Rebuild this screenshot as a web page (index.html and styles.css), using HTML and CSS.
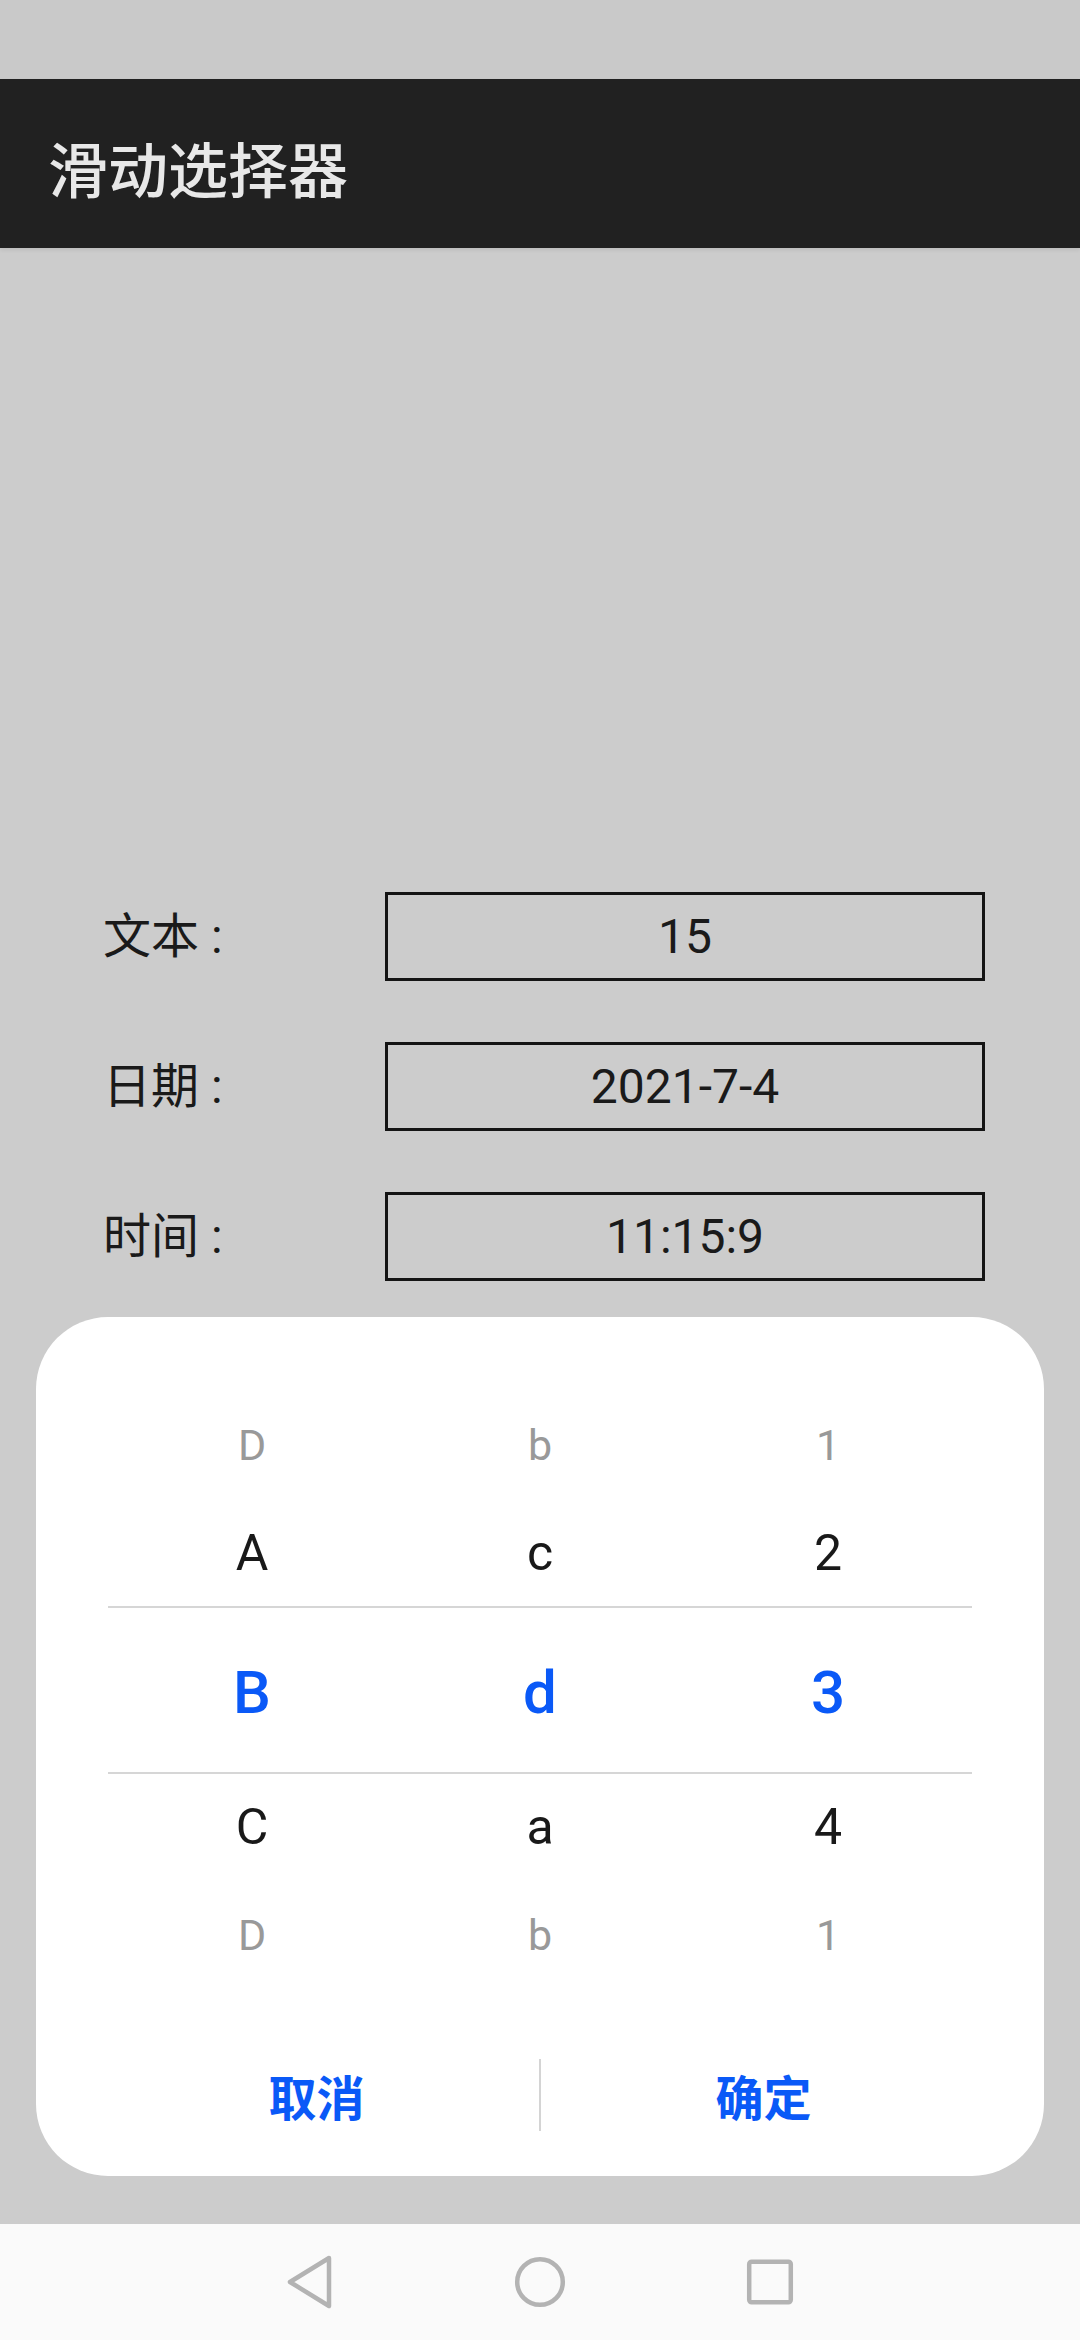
FILE: index.html
```html
<!DOCTYPE html>
<html lang="zh-CN">
<head>
<meta charset="utf-8">
<title>滑动选择器</title>
<link rel="stylesheet" href="styles.css">
</head>
<body>
<div class="screen">
  <div class="statusbar"></div>
  <header class="appbar"><h1 class="title">滑动选择器</h1></header>
  <main class="content">
    <div class="form">
      <div class="form-row"><span class="label">文本 :</span><div class="field">15</div></div>
      <div class="form-row"><span class="label">日期 :</span><div class="field">2021-7-4</div></div>
      <div class="form-row"><span class="label">时间 :</span><div class="field">11:15:9</div></div>
    </div>
  </main>
  <nav class="navbar">
    <div class="nav-slot">
      <svg class="nav-icon" width="50" height="56" viewBox="0 0 50 56"><path d="M44 4 L5 28 L44 52 Z" fill="none" stroke="#b3b3b3" stroke-width="4.5" stroke-linejoin="round"/></svg>
    </div>
    <div class="nav-slot">
      <svg class="nav-icon" width="54" height="54" viewBox="0 0 54 54"><circle cx="27" cy="27" r="22.8" fill="none" stroke="#b3b3b3" stroke-width="4.5"/></svg>
    </div>
    <div class="nav-slot">
      <svg class="nav-icon" width="50" height="50" viewBox="0 0 50 50"><rect x="4.2" y="4.7" width="41.6" height="40.6" rx="2.5" fill="none" stroke="#b3b3b3" stroke-width="4.5"/></svg>
    </div>
  </nav>

  <div class="dialog">
    <div class="picker">
      <div class="pick-row far"><span>D</span><span>b</span><span>1</span></div>
      <div class="pick-row near"><span>A</span><span>c</span><span>2</span></div>
      <div class="pick-row selected"><span>B</span><span>d</span><span>3</span></div>
      <div class="pick-row near"><span>C</span><span>a</span><span>4</span></div>
      <div class="pick-row far"><span>D</span><span>b</span><span>1</span></div>
    </div>
    <div class="actions">
      <button class="action">取消</button>
      <span class="action-sep"></span>
      <button class="action">确定</button>
    </div>
  </div>
</div>
</body>
</html>
```
FILE: styles.css
```css
* { box-sizing: border-box; }
html, body { margin: 0; padding: 0; }
body {
  background: #cccccc;
  font-family: Roboto, "Noto Sans CJK SC", sans-serif;
  color: #1a1a1a;
}
.screen {
  position: relative;
  width: 1080px;
  height: 2340px;
  display: flex;
  flex-direction: column;
  overflow: hidden;
  background: #cccccc;
}
.statusbar {
  height: 79px;
  background: #c9c9c9;
  flex: none;
}
.appbar {
  height: 169px;
  flex: none;
  background: #212121;
  display: flex;
  align-items: center;
  padding-left: 48px;
  box-shadow: 0 2px 4px rgba(0,0,0,0.08);
}
.title {
  margin: 0;
  font-family: "Noto Sans CJK SC", sans-serif;
  font-size: 60px;
  font-weight: 500;
  color: #e8e8e8;
  line-height: 1;
  padding-top: 6px;
}
.content {
  flex: 1;
  padding-top: 644px;
}
.form {
  display: flex;
  flex-direction: column;
  gap: 61px;
}
.form-row {
  display: flex;
  align-items: center;
  height: 89px;
  padding-left: 103px;
}
.label {
  width: 282px;
  flex: none;
  font-size: 48px;
  color: #1a1a1a;
  line-height: 1;
}
.field {
  width: 600px;
  flex: none;
  height: 89px;
  border: 3px solid #141414;
  display: flex;
  align-items: center;
  justify-content: center;
  font-size: 48px;
  color: #1a1a1a;
  line-height: 1;
}
.navbar {
  height: 116px;
  flex: none;
  background: #fafafa;
  display: flex;
  justify-content: center;
  align-items: center;
}
.nav-slot {
  width: 230px;
  display: flex;
  justify-content: center;
  align-items: center;
}
.nav-icon { display: block; }

.dialog {
  position: absolute;
  top: 1317px;
  left: 36px;
  width: 1008px;
  height: 859px;
  background: #ffffff;
  border-radius: 72px;
  padding-top: 73px;
  display: flex;
  flex-direction: column;
}
.picker {
  padding: 0 72px;
  display: flex;
  flex-direction: column;
}
.pick-row {
  display: grid;
  grid-template-columns: repeat(3, 1fr);
  align-items: center;
  text-align: center;
  line-height: 1;
}
.pick-row.far {
  height: 110px;
  font-size: 43px;
  color: #999999;
}
.pick-row.near {
  height: 106px;
  font-size: 50px;
  color: #191919;
}
.pick-row.selected {
  height: 168px;
  padding-top: 6px;
  font-size: 60px;
  font-weight: 500;
  color: #0a59f7;
  border-top: 2px solid #d6d6d6;
  border-bottom: 2px solid #d6d6d6;
}
.actions {
  margin-top: 57px;
  height: 96px;
  padding: 0 58px;
  display: flex;
  align-items: center;
}
.action {
  flex: 1;
  height: 96px;
  background: none;
  border: 0;
  padding: 0;
  font-family: "Noto Sans CJK SC", sans-serif;
  font-size: 48px;
  font-weight: 700;
  color: #0a59f7;
  line-height: 1;
}
.action-sep {
  width: 2px;
  height: 72px;
  background: #d4d4d4;
  flex: none;
}
```
